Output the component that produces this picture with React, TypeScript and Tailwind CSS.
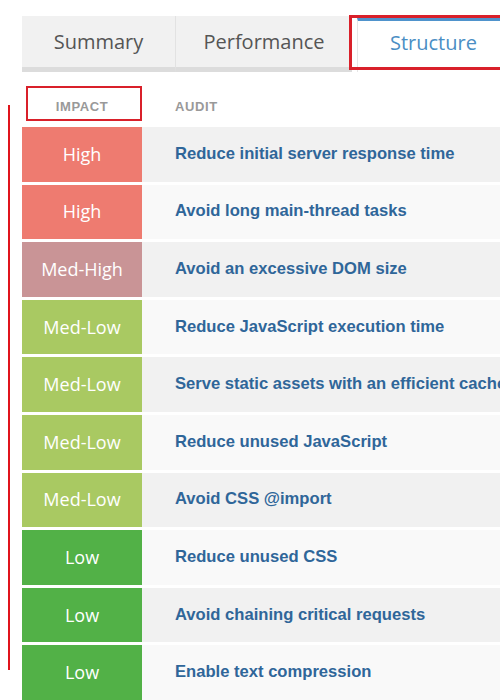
import React from 'react';

type Impact = 'High' | 'Med-High' | 'Med-Low' | 'Low';

const impactColor: Record<Impact, string> = {
  High: 'bg-[#ee7b70]',
  'Med-High': 'bg-[#c99496]',
  'Med-Low': 'bg-[#a9c962]',
  Low: 'bg-[#52b147]',
};

const audits: { impact: Impact; title: string }[] = [
  { impact: 'High', title: 'Reduce initial server response time' },
  { impact: 'High', title: 'Avoid long main-thread tasks' },
  { impact: 'Med-High', title: 'Avoid an excessive DOM size' },
  { impact: 'Med-Low', title: 'Reduce JavaScript execution time' },
  { impact: 'Med-Low', title: 'Serve static assets with an efficient cache policy' },
  { impact: 'Med-Low', title: 'Reduce unused JavaScript' },
  { impact: 'Med-Low', title: 'Avoid CSS @import' },
  { impact: 'Low', title: 'Reduce unused CSS' },
  { impact: 'Low', title: 'Avoid chaining critical requests' },
  { impact: 'Low', title: 'Enable text compression' },
];

const tabFont = { fontFamily: '"Open Sans", "Noto Sans", sans-serif' };
const arial = { fontFamily: '"Liberation Sans", Arial, sans-serif' };

const App = () => {
  return (
    <div className="relative w-[500px] h-[700px] overflow-hidden bg-white">
      <div className="pl-[22px] pt-[16px]">
        {/* tabs */}
        <div className="flex items-stretch h-[56px] w-[600px]" style={tabFont}>
          <div className="w-[154px] flex items-center justify-center bg-[#f1f1f1] border-r border-[#e2e2e2] border-b-[5px] border-b-[#dcdcdc] text-[20px] text-[#555]">
            Summary
          </div>
          <div className="w-[176px] flex items-center justify-center bg-[#f1f1f1] border-b-[5px] border-b-[#dcdcdc] text-[20px] text-[#555]">
            Performance
          </div>
          <div className="ml-[5px] mt-[2px] w-[200px] flex items-center pl-[32px] pb-[8px] bg-white border-l border-[#e6e6e6] border-t-[3px] border-t-[#4f93cc] text-[20px] text-[#4a8ec4]">
            Structure
          </div>
        </div>

        {/* table */}
        <div className="flex flex-col gap-[3px]" style={arial}>
          <div className="flex pt-[27px] pb-[9px] text-[13px] font-bold tracking-[0.6px] text-[#999] leading-[16px]">
            <div className="w-[120px] text-center">IMPACT</div>
            <div className="pl-[33px]">AUDIT</div>
          </div>
          {audits.map((a, i) => (
            <div key={i} className="flex h-[54.6px]">
              <div
                className={`w-[120px] shrink-0 flex items-center justify-center text-white text-[18px] ${impactColor[a.impact]}`}
                style={tabFont}
              >
                {a.impact}
              </div>
              <div
                className={`flex-1 flex items-center pl-[33px] whitespace-nowrap overflow-hidden text-[16.6px] font-bold text-[#2f6699] ${
                  i % 2 === 0 ? 'bg-[#f1f1f1]' : 'bg-[#f9f9f9]'
                }`}
              >
                {a.title}
              </div>
            </div>
          ))}
        </div>
      </div>

      {/* annotation marks */}
      <div className="absolute left-[349px] top-[15px] w-[170px] h-[55px] border-[3px] border-[#d9202a]" />
      <div className="absolute left-[26px] top-[86px] w-[116px] h-[35px] border-[2.5px] border-[#d9202a]" />
      <div className="absolute left-[8px] top-[105px] w-[2px] h-[565px] bg-[#e0141c]" />
    </div>
  );
};

export default App;
